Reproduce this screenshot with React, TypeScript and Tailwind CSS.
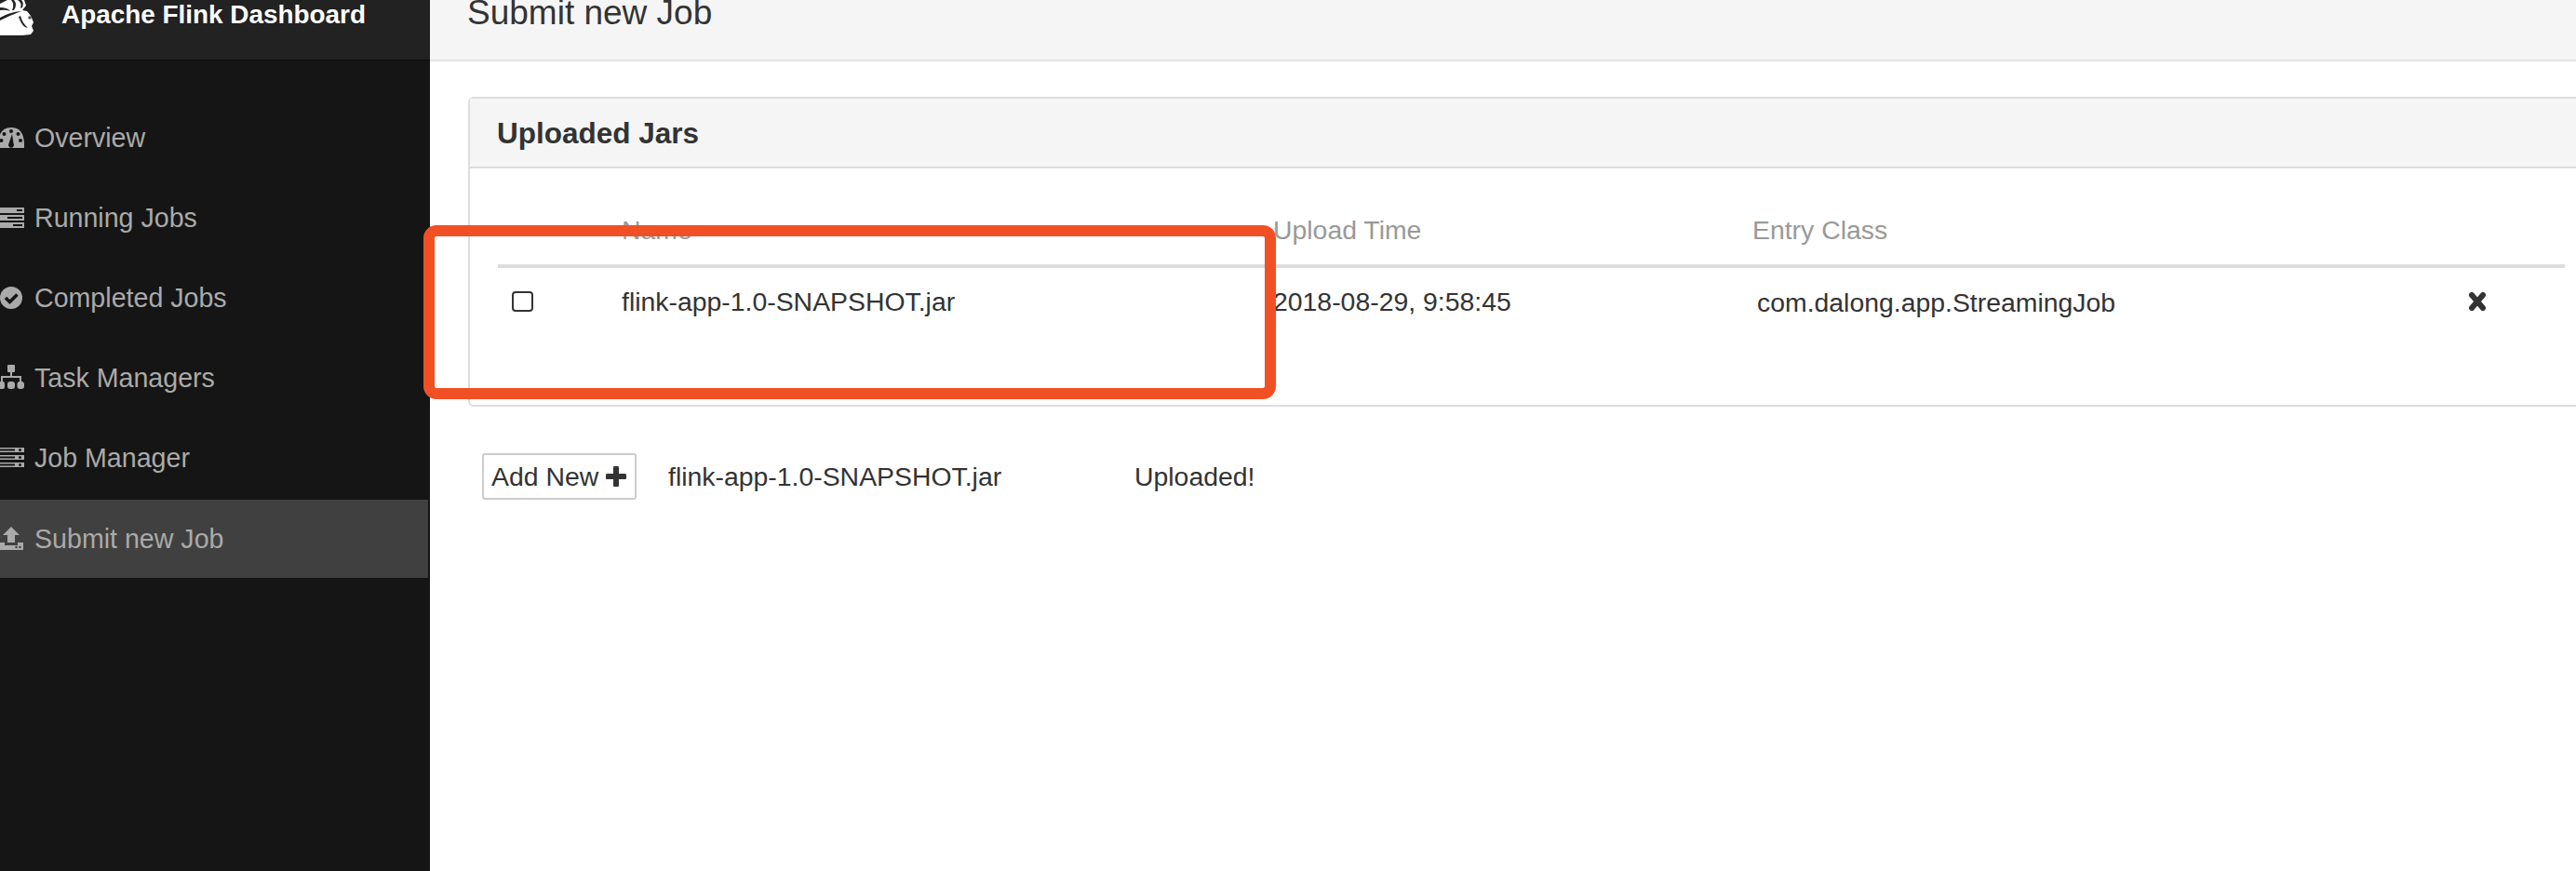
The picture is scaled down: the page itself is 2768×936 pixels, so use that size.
const font = { fontFamily: '"Liberation Sans", Arial, sans-serif' };

const GaugeIcon = () => (
  <svg viewBox="0 0 26 26" className="w-[26px] h-[26px] shrink-0 fill-[#aaaaaa]">
    <path d="M-2 24 Q-3 2 12 2 Q27 2 26 24 Z" />
    <g className="fill-[#151515]">
      <circle cx="12" cy="6" r="2" />
      <circle cx="4.500" cy="9" r="2" />
      <circle cx="19.500" cy="9" r="2" />
      <circle cx="1.500" cy="16" r="2" />
      <circle cx="22" cy="16" r="2" />
      <path d="M13 9 L14.500 19 A3 3 0 1 1 9.500 19 Z" />
    </g>
  </svg>
);

const TasksIcon = () => (
  <svg viewBox="0 0 26 26" className="w-[26px] h-[26px] shrink-0 fill-[#aaaaaa]">
    <rect x="-2" y="2" width="28" height="6" />
    <rect x="-2" y="10" width="28" height="6" />
    <rect x="-2" y="18" width="28" height="6" />
    <g className="fill-[#151515]">
      <rect x="18" y="4" width="6" height="2" />
      <rect x="8" y="12" width="16" height="2" />
      <rect x="14" y="20" width="10" height="2" />
    </g>
  </svg>
);

const CheckIcon = () => (
  <svg viewBox="0 0 26 26" className="w-[26px] h-[26px] shrink-0">
    <circle cx="12" cy="13" r="12" className="fill-[#aaaaaa]" />
    <path d="M6 13 L10.500 17.500 L18.500 9.500" fill="none" stroke="#151515" strokeWidth="3.500" />
  </svg>
);

const SitemapIcon = () => (
  <svg viewBox="0 0 26 28" className="w-[26px] h-[28px] shrink-0 fill-[#aaaaaa]">
    <rect x="8" y="0" width="8" height="8" rx="1" />
    <rect x="11" y="8" width="2" height="6" />
    <rect x="1" y="12" width="22" height="2" />
    <rect x="1" y="12" width="2" height="6" />
    <rect x="21" y="12" width="2" height="6" />
    <rect x="-3" y="18" width="8" height="8" rx="2" />
    <rect x="8" y="18" width="8" height="8" rx="3" />
    <rect x="18.500" y="18" width="7.500" height="8" rx="3" />
  </svg>
);

const ServerIcon = () => (
  <svg viewBox="0 0 26 26" className="w-[26px] h-[26px] shrink-0 fill-[#aaaaaa]">
    <rect x="-2" y="2" width="28" height="5" />
    <rect x="-2" y="10" width="28" height="5" />
    <rect x="-2" y="18" width="28" height="5" />
    <g className="fill-[#151515]">
      <rect x="-2" y="3.500" width="18" height="2" />
      <rect x="-2" y="11.500" width="18" height="2" />
      <rect x="-2" y="19.500" width="18" height="2" />
      <circle cx="21.500" cy="4.500" r="1.500" />
      <circle cx="21.500" cy="12.500" r="1.500" />
      <circle cx="21.500" cy="20.500" r="1.500" />
    </g>
  </svg>
);

const UploadIcon = () => (
  <svg viewBox="0 0 26 26" className="w-[26px] h-[26px] shrink-0 fill-[#aaaaaa]">
    <path d="M12 0 L21 9 L16 9 L16 17 L8 17 L8 9 L3 9 Z" />
    <path d="M-2 17 L5 17 L5 20 L19 20 L19 17 L25 17 L25 25 L-2 25 Z" />
    <circle cx="17.500" cy="22" r="1.200" fill="#404040" />
    <circle cx="21.500" cy="22" r="1.200" fill="#404040" />
  </svg>
);

// Flink squirrel, cut off by the top of the page
const Squirrel = () => (
  <svg viewBox="0 0 38 40" className="w-[38px] h-[40px] shrink-0">
    <path
      d="M0 4 L8 0 L26 0 L28 6 L24 11 L29 12 L33 17 L36 24 L34 28 L36 33 L33 37 L24 38 L0 38 Z"
      fill="#ffffff"
    />
    <path d="M0 19 Q10 13 23 12 Q12 16 0 22 Z" fill="#222222" />
    <path d="M0 8 Q8 8 11 12 Q6 10 0 11 Z" fill="#222222" />
    <path d="M12 0 Q16 5 13 11 L15 11 Q19 5 15 0 Z" fill="#222222" />
    <path d="M19 0 Q24 3 22 9 L24 8 Q26 3 23 0 Z" fill="#222222" />
    <path d="M20 18 Q24 30 30 30 Q24 25 22 17 Z" fill="#222222" />
    <circle cx="32" cy="19" r="1.800" fill="#555555" />
  </svg>
);

const navItems = [
  { label: "Overview", icon: <GaugeIcon /> },
  { label: "Running Jobs", icon: <TasksIcon /> },
  { label: "Completed Jobs", icon: <CheckIcon /> },
  { label: "Task Managers", icon: <SitemapIcon /> },
  { label: "Job Manager", icon: <ServerIcon /> },
  { label: "Submit new Job", icon: <UploadIcon />, active: true },
];

const App = () => {
  return (
    <div className="relative flex w-[2768px] h-[936px] overflow-hidden bg-white" style={font}>
      <aside className="w-[462px] shrink-0 bg-[#151515]">
        <div className="flex items-start h-[65px] bg-[#222222] border-b border-[#0c0c0c] gap-[28px]">
          <Squirrel />
          <span className="text-[27.9px] leading-[32px] font-bold text-white">Apache Flink Dashboard</span>
        </div>
        <nav className="pt-[40px]">
          {navItems.map((item) => (
            <div
              key={item.label}
              className={
                item.active
                  ? "flex items-center gap-[11px] w-[460px] h-[84px] mt-[2px] bg-[#404040] text-[28.6px] text-[#aaaaaa]"
                  : "flex items-center gap-[11px] h-[86px] text-[28.6px] text-[#aaaaaa]"
              }
            >
              {item.icon}
              <span>{item.label}</span>
            </div>
          ))}
        </nav>
      </aside>

      <main className="flex-1 min-w-0">
        <div className="flex items-start h-[66px] bg-[#f5f5f5] border-b-2 border-[#e4e4e4] pl-[40px]">
          <h1 className="text-[37px] leading-[40px] -mt-[6px] text-[#333333]">Submit new Job</h1>
        </div>

        <section className="mt-[38px] ml-[41px] -mr-[10px] h-[333px] border-2 border-[#dddddd] rounded-[6px] text-[#333333]">
          <div className="flex items-center h-[75px] pl-[29px] pt-[2px] bg-[#f5f5f5] border-b-2 border-[#dddddd]">
            <h2 className="text-[31.500px] font-bold">Uploaded Jars</h2>
          </div>
          <div className="ml-[30px] mr-[20px]">
            <div className="grid grid-cols-[133px_700px_515px_1fr] items-center h-[107px] pt-[30px] border-b-4 border-[#dddddd] text-[28.4px] text-[#999999]">
              <span />
              <span>Name</span>
              <span>Upload Time</span>
              <span>Entry Class</span>
            </div>
            <div className="grid grid-cols-[133px_700px_517px_767px_1fr] items-center pt-[13px] text-[28.4px]">
              <div className="pl-[15px]">
                <div className="w-[23px] h-[22px] border-2 border-[#333333] rounded-[4px]" />
              </div>
              <span>flink-app-1.0-SNAPSHOT.jar</span>
              <span>2018-08-29, 9:58:45</span>
              <span className="ml-[3px] mt-[3px]">com.dalong.app.StreamingJob</span>
              <svg viewBox="0 0 20 20" className="w-[20px] h-[20px]">
                <path d="M4 3 L16 17 M16 3 L4 17" stroke="#333333" strokeWidth="6" strokeLinecap="round" />
              </svg>
            </div>
          </div>
        </section>

        <div className="flex items-center mt-[50px] ml-[56px] text-[28.4px] text-[#333333]">
          <button className="flex items-center gap-[8px] w-[166px] h-[50px] pl-[8px] border-2 border-[#cccccc] rounded-[3px] bg-white">
            <span>Add New</span>
            <svg viewBox="0 0 22 22" className="w-[22px] h-[22px]">
              <path d="M11 2 L11 20 M2 11 L20 11" stroke="#333333" strokeWidth="6" strokeLinecap="round" />
            </svg>
          </button>
          <span className="ml-[34px] w-[501px]">flink-app-1.0-SNAPSHOT.jar</span>
          <span>Uploaded!</span>
        </div>
      </main>

      {/* hand-drawn highlight over the first row */}
      <div className="absolute left-[455px] top-[242px] w-[916px] h-[187px] border-[12px] border-[#f15025] rounded-[14px]" />
    </div>
  );
};

export default App;
